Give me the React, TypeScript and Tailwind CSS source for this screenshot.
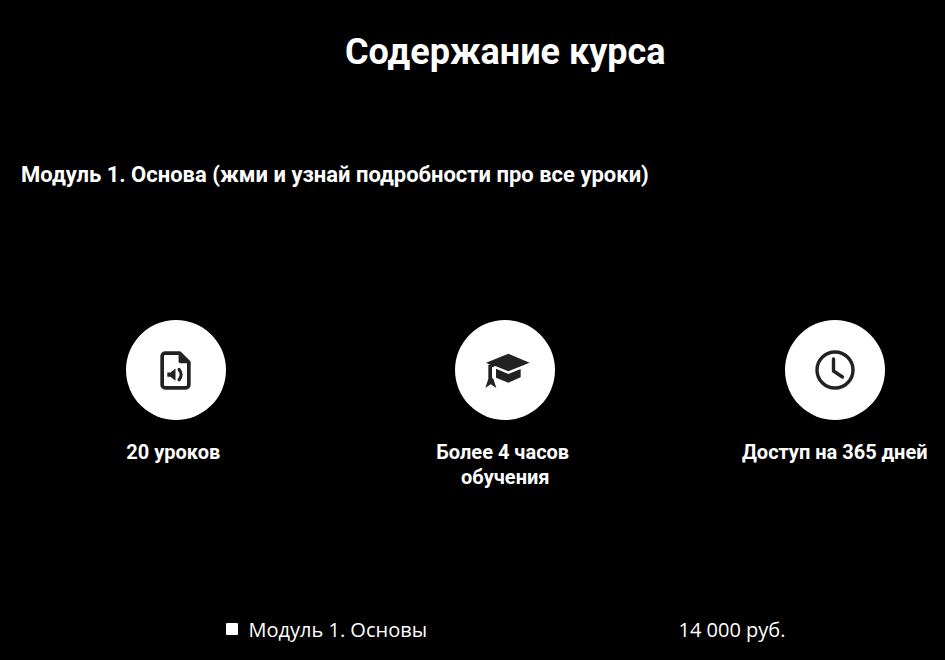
export default function App() {
  const items = [
    {
      label: <>20 уроков&nbsp;</>,
      icon: (
        <svg viewBox="0 0 30 38" className="w-[31px] h-[39px]" fill="none">
          <path d="M5 2h14l9 9v22a3 3 0 0 1-3 3H5a3 3 0 0 1-3-3V5a3 3 0 0 1 3-3z" stroke="#222" strokeWidth="3.600" strokeLinejoin="round" />
          <path d="M18 3v7a2 2 0 0 0 2 2h8z" fill="#222" />
          <path d="M7 21h3l5-4v12l-5-4H7z" fill="#222" />
          <path d="M18.500 18c2.500 3 2.500 7 0 10" stroke="#222" strokeWidth="3.200" strokeLinecap="round" />
        </svg>
      ),
    },
    {
      label: (
        <>
          Более 4 часов&nbsp;
          <br />
          обучения
        </>
      ),
      icon: (
        <svg viewBox="0 0 156 126" className="ml-[2px] mt-[2px] w-[52px] h-[42px]" fill="#222">
          <path d="M85 11 149 38 85 64 46 48 36 52 34 46 18 38z" />
          <path d="M48 56 85 72 122 57V82L85 98 48 83z" />
          <path d="M25 44h11v40l4 2 9 28-17-11-16 11 9-28 0-2z" />
        </svg>
      ),
    },
    {
      label: <>Доступ на 365 дней</>,
      icon: (
        <svg viewBox="0 0 40 40" className="w-[40px] h-[40px]" fill="none" stroke="#222" strokeWidth="3.400">
          <circle cx="20" cy="20" r="18" />
          <path d="M18.500 9v12l9 6" strokeLinecap="round" strokeLinejoin="round" />
        </svg>
      ),
    },
  ];

  return (
    <div className="h-[660px] w-[945px] overflow-hidden bg-black text-white font-['Roboto',sans-serif]">
      <div className="ml-[11px] w-[988.5px]">
        <h1 className="pt-[30px] text-center text-[36px] leading-[44px] font-bold">Содержание курса</h1>
        <h2 className="mt-[87px] pl-[10px] text-[22px] leading-[28px] font-bold">
          Модуль 1. Основа (жми и узнай подробности про все уроки)
        </h2>
        <div className="mt-[131px] grid grid-cols-3">
          {items.map((item, i) => (
            <div key={i} className="flex flex-col items-center">
              <div className="flex h-[100px] w-[100px] items-center justify-center rounded-full bg-white">
                {item.icon}
              </div>
              <div className="mt-[20px] text-center text-[20px] leading-[25px] font-bold">{item.label}</div>
            </div>
          ))}
        </div>
        <div className="mt-[126px] flex items-center font-['Open_Sans',sans-serif] text-[20px] leading-[28px]">
          <span className="ml-[215px] mb-[3px] h-[12px] w-[12px] rounded-[1px] bg-white" />
          <span className="ml-[10.500px] w-[430px]">Модуль 1. Основы</span>
          <span>14 000 руб.</span>
        </div>
      </div>
    </div>
  );
}
